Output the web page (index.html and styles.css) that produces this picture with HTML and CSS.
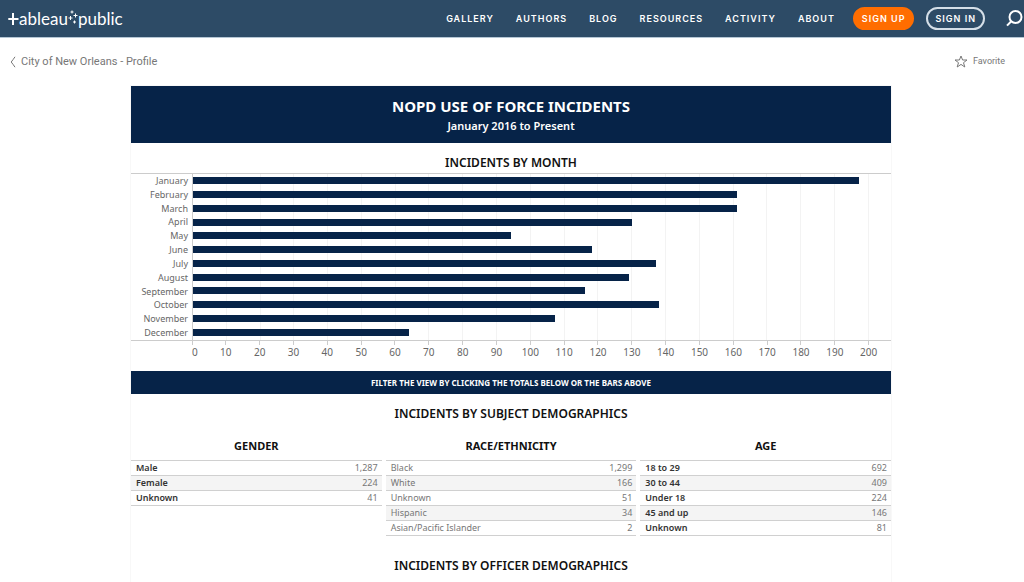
FILE: index.html
```
<!DOCTYPE html>
<html lang="en">
<head>
<meta charset="utf-8">
<meta name="viewport" content="width=device-width, initial-scale=1">
<title>NOPD Use of Force Incidents</title>
<link rel="stylesheet" href="styles.css">
</head>
<body>
<header class="topbar">
  <a class="logo" href="#" aria-label="tableau public">
    <svg class="logo-cross" width="11" height="14" viewBox="0 0 11 14" aria-hidden="true"><path d="M5 1V13M0.3 7H10.5"/></svg>
    <span>ableau</span>
    <svg class="logo-sparks" width="10" height="17" viewBox="0 0 10 17" aria-hidden="true"><path d="M4 0.5v3M2.500 2h3M7.500 3.500v4M5.500 5.500h4M2.500 6v4M0.500 8h4M6.500 10.500v3M5 12h3"/></svg>
    <span>public</span>
  </a>
  <nav class="nav">
    <a href="#">GALLERY</a>
    <a href="#">AUTHORS</a>
    <a href="#">BLOG</a>
    <a href="#">RESOURCES</a>
    <a href="#">ACTIVITY</a>
    <a href="#">ABOUT</a>
  </nav>
  <div class="actions">
    <button class="pill pill-primary" type="button">SIGN UP</button>
    <button class="pill" type="button">SIGN IN</button>
  </div>
  <button class="search" type="button" aria-label="Search">
    <svg width="18" height="18" viewBox="0 0 18 18" aria-hidden="true"><circle cx="9.500" cy="7" r="6"/><path d="M5.300 11.300L1 15.600"/></svg>
  </button>
</header>

<div class="subbar">
  <a class="back" href="#"><svg width="6" height="12" viewBox="0 0 6 12" aria-hidden="true"><path d="M5 0.800C3.500 3 2.500 4.500 1.200 6C2.500 7.500 3.500 9 5 11.200"/></svg>City of New Orleans - Profile</a>
  <button class="favorite" type="button"><svg width="14" height="13" viewBox="0 0 14 13" aria-hidden="true"><path d="M7 1L8.600 5H13L9.500 7.700L10.800 12L7 9.400L3.200 12L4.500 7.700L1 5H5.400Z"/></svg>Favorite</button>
</div>

<main class="page">
  <div class="dashboard">
    <div class="banner">
      <h1>NOPD USE OF FORCE INCIDENTS</h1>
      <p>January 2016 to Present</p>
    </div>

    <section>
      <h2 class="chart-title">INCIDENTS BY MONTH</h2>
      <div class="chart">
        <ul class="months">
          <li>January</li><li>February</li><li>March</li><li>April</li><li>May</li><li>June</li>
          <li>July</li><li>August</li><li>September</li><li>October</li><li>November</li><li>December</li>
        </ul>
        <div class="plot">
          <div class="gridlines"><i></i><i></i><i></i><i></i><i></i><i></i><i></i><i></i><i></i><i></i><i></i><i></i><i></i><i></i><i></i><i></i><i></i><i></i><i></i><i></i></div>
          <div class="bars">
            <div class="bar" style="width:95.4%"></div>
            <div class="bar" style="width:77.9%"></div>
            <div class="bar" style="width:77.9%"></div>
            <div class="bar" style="width:62.9%"></div>
            <div class="bar" style="width:45.5%"></div>
            <div class="bar" style="width:57.1%"></div>
            <div class="bar" style="width:66.3%"></div>
            <div class="bar" style="width:62.4%"></div>
            <div class="bar" style="width:56.1%"></div>
            <div class="bar" style="width:66.8%"></div>
            <div class="bar" style="width:51.8%"></div>
            <div class="bar" style="width:31%"></div>
          </div>
        </div>
      </div>
      <div class="axis">
        <span class="zero">0</span><span>10</span><span>20</span><span>30</span><span>40</span><span>50</span><span>60</span><span>70</span><span>80</span><span>90</span><span>100</span><span>110</span><span>120</span><span>130</span><span>140</span><span>150</span><span>160</span><span>170</span><span>180</span><span>190</span><span>200</span>
      </div>
    </section>

    <p class="hint">FILTER THE VIEW BY CLICKING THE TOTALS BELOW OR THE BARS ABOVE</p>

    <section>
      <h2 class="section-title">INCIDENTS BY SUBJECT DEMOGRAPHICS</h2>
      <div class="tables">
        <table class="totals strong">
          <caption>GENDER</caption>
          <tbody>
            <tr><th scope="row">Male</th><td>1,287</td></tr>
            <tr><th scope="row">Female</th><td>224</td></tr>
            <tr><th scope="row">Unknown</th><td>41</td></tr>
          </tbody>
        </table>
        <table class="totals">
          <caption>RACE/ETHNICITY</caption>
          <tbody>
            <tr><th scope="row">Black</th><td>1,299</td></tr>
            <tr><th scope="row">White</th><td>166</td></tr>
            <tr><th scope="row">Unknown</th><td>51</td></tr>
            <tr><th scope="row">Hispanic</th><td>34</td></tr>
            <tr><th scope="row">Asian/Pacific Islander</th><td>2</td></tr>
          </tbody>
        </table>
        <table class="totals strong">
          <caption>AGE</caption>
          <tbody>
            <tr><th scope="row">18 to 29</th><td>692</td></tr>
            <tr><th scope="row">30 to 44</th><td>409</td></tr>
            <tr><th scope="row">Under 18</th><td>224</td></tr>
            <tr><th scope="row">45 and up</th><td>146</td></tr>
            <tr><th scope="row">Unknown</th><td>81</td></tr>
          </tbody>
        </table>
      </div>
    </section>

    <section>
      <h2 class="section-title officer">INCIDENTS BY OFFICER DEMOGRAPHICS</h2>
    </section>
  </div>
</main>
</body>
</html>
```
FILE: styles.css
```
* { box-sizing: border-box; }
body {
  margin: 0;
  background: #fff;
  color: #111;
  font-family: "Noto Sans", "Open Sans", sans-serif;
}
h1, h2, p, ul { margin: 0; padding: 0; }
a { color: inherit; text-decoration: none; }
button { border: 0; padding: 0; background: none; font: inherit; color: inherit; cursor: pointer; }
svg { fill: none; stroke: currentColor; flex: none; }

.topbar {
  display: flex;
  align-items: center;
  height: 38px;
  padding: 0 0 0 8px;
  background: #2d4b66;
  border-bottom: 1px solid #b4c6d4;
  color: #fff;
}
.logo {
  display: flex;
  align-items: center;
  margin-right: auto;
  font: 17px/24px Lato, sans-serif;
}
.logo-cross { stroke-width: 2; }
.logo-sparks { stroke-width: 1; }
.nav {
  display: flex;
  gap: 22px;
  font: 600 9px/16px Inter, sans-serif;
  letter-spacing: 1px;
}
.actions { display: flex; gap: 12px; margin: 0 21px 0 18px; }
.pill {
  height: 23px;
  padding: 0 7px;
  border: 2px solid #d5dfe8;
  border-radius: 12px;
  font: 600 9px/16px Inter, sans-serif;
  letter-spacing: 1px;
}
.pill-primary { border-color: #ff6d00; background: #ff6d00; }
.search { display: flex; stroke-width: 2; }

.subbar {
  display: flex;
  align-items: center;
  justify-content: space-between;
  height: 48px;
  padding: 0 19px 0 10px;
  color: #777;
}
.back { display: flex; align-items: center; gap: 5px; font: 11px/16px Roboto, sans-serif; }
.favorite { display: flex; align-items: center; gap: 5px; padding-bottom: 2px; font: 9px/12px Roboto, sans-serif; }

.page { padding: 0 10px 0 8px; }
.dashboard {
  max-width: 760px;
  margin: 0 auto;
  padding-bottom: 6px;
  box-shadow: 0 0 0 1px #f8f8f8;
}
.banner {
  padding: 9px 0;
  background: #062348;
  color: #fff;
  text-align: center;
}
.banner h1 { font-size: 15px; line-height: 23px; font-weight: 700; }
.banner p { font-size: 11px; line-height: 16px; font-weight: 600; }
.chart-title, .section-title {
  padding-top: 10px;
  font-size: 12px;
  line-height: 20px;
  font-weight: 600;
  text-align: center;
}

.chart {
  display: grid;
  grid-template-columns: 62px 1fr;
  border-top: 1px solid #ccc;
  border-bottom: 1px solid #ccc;
  height: 168px;
}
.months {
  display: grid;
  grid-template-rows: repeat(12, 1fr);
  padding-right: 4px;
  border-right: 1px solid #ccc;
  list-style: none;
  font-size: 9px;
  line-height: 13px;
  color: #666;
  text-align: right;
}
.plot { display: grid; }
.gridlines, .bars { grid-area: 1 / 1; }
.gridlines { display: grid; grid-template-columns: repeat(20, 10fr) 6.6fr; }
.gridlines i { border-right: 1px solid #f3f3f3; }
.bars { display: grid; grid-template-rows: repeat(12, 1fr); align-items: center; padding-bottom: 1px; }
.bar { height: 7px; background: #062348; }
.axis {
  display: grid;
  grid-template-columns: 5fr repeat(20, 10fr) 1.6fr;
  margin-left: 61px;
  font-size: 10px;
  line-height: 14px;
  color: #666;
  text-align: center;
}
.axis span { min-width: 0; }
.axis span::before {
  content: "";
  display: block;
  width: 1px;
  height: 4px;
  margin: 0 auto;
  background: #ccc;
}
.axis .zero { text-align: left; }
.axis .zero::before { margin: 0; }
.hint {
  margin-top: 12px;
  background: #062348;
  color: #fff;
  font-size: 8px;
  line-height: 23px;
  font-weight: 700;
  text-align: center;
}
.tables { display: grid; grid-template-columns: repeat(3, 1fr); gap: 4px; align-items: start; padding-top: 12px; }
.totals {
  width: 100%;
  border-collapse: collapse;
  font-size: 9px;
  line-height: 14px;
  color: #777;
}
.totals caption { padding-bottom: 4px; font-size: 11px; line-height: 20px; font-weight: 700; color: #111; }
.totals tr { border-top: 1px solid #d0d0d0; border-bottom: 1px solid #d0d0d0; }
.totals tr:nth-child(even) { background: #f4f4f4; }
.totals th { padding: 0 0 0 5px; font-weight: 400; text-align: left; }
.totals td { padding: 0 4px 0 0; text-align: right; }
.strong th { color: #333; font-weight: 600; }
.officer { padding-top: 20px; }
```
